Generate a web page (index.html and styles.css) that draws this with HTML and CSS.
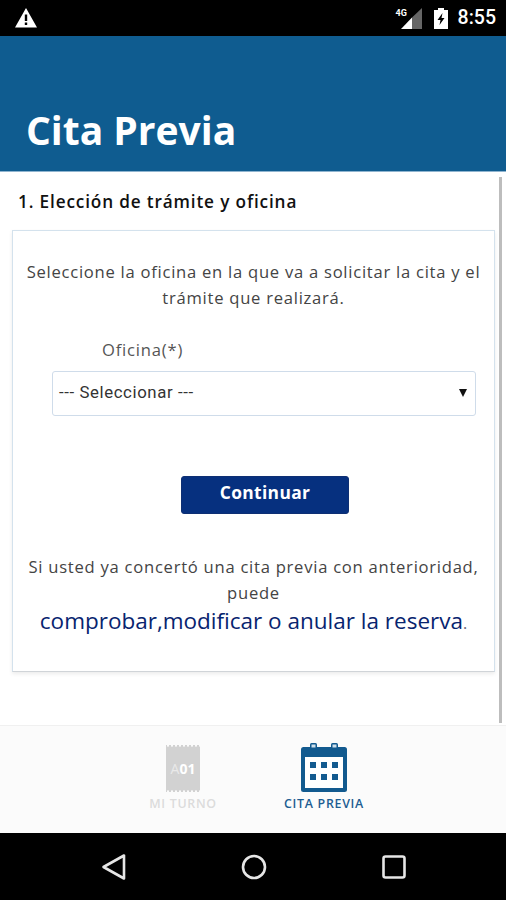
FILE: index.html
```html
<!DOCTYPE html>
<html lang="es">
<head>
<meta charset="utf-8">
<title>Cita Previa</title>
<link rel="stylesheet" href="styles.css">
</head>
<body>
<div class="phone">
  <div class="status">
    <svg class="warn" width="24" height="20" viewBox="0 0 24 20"><path fill="#fff" fill-rule="evenodd" d="M12 0 L23 19.5 H1 Z M10.8 6.5 V13 H13.2 V6.5 Z M10.8 14.5 V17 H13.2 V14.5 Z"/></svg>
    <div class="status-right">
      <div class="signal">
        <svg width="21" height="21" viewBox="0 0 21 21"><path fill="#666" d="M21 0 V21 H11 V9.5 Z"/><path fill="#fff" d="M11 9.5 V21 H0 Z"/></svg>
        <span class="net">4G</span>
      </div>
      <svg class="batt" width="14" height="21" viewBox="0 0 14 21"><path fill="#fff" fill-rule="evenodd" d="M4 0 H10 V2 H14 V21 H0 V2 H4 Z M8.5 5 L3.5 12 H6.5 L5.5 17 L10.5 10 H7.5 Z"/></svg>
      <span class="time">8:55</span>
    </div>
  </div>
  <header class="appbar"><h1 class="title">Cita Previa</h1></header>
  <main class="content">
    <h2 class="step">1. Elección de trámite y oficina</h2>
    <section class="card">
      <p class="intro">Seleccione la oficina en la que va a solicitar la cita y el trámite que realizará.</p>
      <div class="field">
        <label class="label">Oficina(*)</label>
        <div class="select"><span class="select-text">--- Seleccionar ---</span><i class="caret"></i></div>
      </div>
      <div class="actions"><button class="btn">Continuar</button></div>
      <p class="note">Si usted ya concertó una cita previa con anterioridad, puede</p>
      <p class="linkline"><a class="link">comprobar,modificar o anular la reserva</a><span class="dot">.</span></p>
    </section>
    <div class="scrollbar"></div>
  </main>
  <nav class="tabs">
    <div class="tab off">
      <div class="ticket"><span class="tk-a">A</span><span class="tk-n">01</span></div>
      <span class="tab-label">MI TURNO</span>
    </div>
    <div class="tab on">
      <svg width="46" height="49" viewBox="0 0 46 49">
        <rect x="0" y="4" width="46" height="45" rx="2.5" fill="#125a8f"/>
        <rect x="9" y="0" width="7" height="7" rx="1.5" fill="#125a8f"/>
        <rect x="30" y="0" width="7" height="7" rx="1.5" fill="#125a8f"/>
        <rect x="10.5" y="1.5" width="4" height="3" fill="#cfe0ec"/>
        <rect x="31.5" y="1.5" width="4" height="3" fill="#cfe0ec"/>
        <rect x="4" y="14" width="38" height="31" fill="#fff"/>
        <g fill="#125a8f">
          <rect x="9" y="19" width="6" height="6"/><rect x="20" y="19" width="6" height="6"/><rect x="31" y="19" width="6" height="6"/>
          <rect x="9" y="31" width="6" height="6"/><rect x="20" y="31" width="6" height="6"/><rect x="31" y="31" width="6" height="6"/>
        </g>
      </svg>
      <span class="tab-label">CITA PREVIA</span>
    </div>
  </nav>
  <div class="navbar">
    <svg width="26" height="28" viewBox="0 0 26 28"><path d="M24 2.5 V25.5 L3.5 14 Z" fill="none" stroke="#e6e6e6" stroke-width="2.6" stroke-linejoin="round"/></svg>
    <svg width="26" height="26" viewBox="0 0 26 26"><circle cx="13" cy="13" r="11" fill="none" stroke="#e6e6e6" stroke-width="2.6"/></svg>
    <svg width="24" height="24" viewBox="0 0 24 24"><rect x="1.5" y="1.5" width="21" height="21" rx="2" fill="none" stroke="#e6e6e6" stroke-width="2.6"/></svg>
  </div>
</div>
</body>
</html>
```

FILE: styles.css
```css
* { box-sizing: border-box; }
html, body { margin: 0; padding: 0; }
body { font-family: "Open Sans", sans-serif; background: #fff; }
.phone { width: 506px; height: 900px; display: flex; flex-direction: column; overflow: hidden; }

.status { height: 36px; flex: none; background: #000; display: flex; align-items: center; justify-content: space-between; padding: 0 10px 0 14px; }
.warn { margin-top: -1px; }
.status-right { display: flex; align-items: center; }
.signal { position: relative; width: 21px; height: 21px; margin-right: 12px; }
.signal svg { display: block; }
.net { position: absolute; left: -5px; top: 0; font: 700 9px/10px "Roboto", sans-serif; color: #fff; }
.batt { margin-right: 10px; }
.time { font: 500 19.5px/24px "Roboto", sans-serif; color: #fff; }

.appbar { height: 136px; flex: none; background: #0f5c90; border-bottom: 1px solid #8fb4cf; display: flex; align-items: flex-end; padding: 0 0 15px 26px; }
.title { margin: 0; font-size: 39px; line-height: 52px; font-weight: 700; color: #fff; }

.content { position: relative; height: 553px; flex: none; padding: 0 11px 0 12px; background: #fff; }
.step { margin: 0; padding: 19px 0 0 6px; height: 58px; font-size: 17.2px; line-height: 22px; font-weight: 600; letter-spacing: .85px; color: #111; white-space: nowrap; }
.card { height: 442px; border: 1px solid #d4e2ed; border-bottom-color: #d0d4d8; box-shadow: 0 2px 4px rgba(0,0,0,.08); background: #fff; padding: 28px 14px 0; text-align: center; color: #444; }
.intro { margin: 0 -4px; font-size: 16.6px; line-height: 26px; letter-spacing: .74px; color: #444; }
.field { padding: 0 4px 0 25px; margin-top: 28px; text-align: left; }
.label { display: block; padding-left: 50px; font-size: 16.6px; line-height: 22px; letter-spacing: .8px; color: #555; }
.select { margin-top: 10px; height: 45px; border: 1px solid #cfdcea; border-radius: 3px; display: flex; align-items: center; justify-content: space-between; padding: 0 8px 0 6px; font: 16.8px "Roboto", "Liberation Sans", sans-serif; letter-spacing: .6px; color: #333; }
.select-text { padding-bottom: 4px; }
.caret { width: 0; height: 0; margin-bottom: 2px; border-left: 4px solid transparent; border-right: 4px solid transparent; border-top: 8px solid #111; }
.actions { margin-top: 60px; display: flex; justify-content: center; padding-left: 23px; }
.btn { width: 168px; height: 38px; border: 1px solid #0e2f73; border-radius: 3px; background: #06307f; color: #fff; font: 700 17.4px/22px "Open Sans", sans-serif; letter-spacing: .35px; padding: 0 0 6px; }
.note { margin: 40px -4px 0; font-size: 16.6px; line-height: 26px; letter-spacing: .74px; color: #444; }
.linkline { margin: 0; line-height: 30px; white-space: nowrap; }
.link { font-size: 22.5px; font-weight: 500; color: #08246f; }
.dot { font-size: 16px; color: #667; }
.scrollbar { position: absolute; right: 4px; top: 5px; width: 3px; height: 546px; background: #bdbdbd; }

.tabs { height: 108px; flex: none; background: #fbfbfb; border-top: 1px solid #f0f0f0; display: flex; justify-content: center; gap: 67px; padding: 17px 0 0 1px; }
.tab { display: flex; flex-direction: column; align-items: center; width: 74px; }
.tab-label { font-size: 12.4px; line-height: 16px; font-weight: 600; margin-top: 4px; letter-spacing: .7px; white-space: nowrap; }
.off .tab-label { color: #dcdcdc; }
.on .tab-label { color: #1c5d92; }
.ticket { width: 34px; height: 47px; margin-top: 2px; display: flex; align-items: center; justify-content: center; font-size: 14px; line-height: 16px; color: #fff; font-weight: 700; background-color: #d2d2d2; background-image: radial-gradient(circle, #fbfbfb 1px, transparent 1.3px), radial-gradient(circle, #fbfbfb 1px, transparent 1.3px); background-size: 4px 3px; background-repeat: repeat-x; background-position: 0 -1px, 0 calc(100% + 1px); }
.tk-a { font-weight: 400; color: #e9e9e9; }

.navbar { flex: 1; background: #000; display: flex; align-items: center; justify-content: center; gap: 115px; }
```
